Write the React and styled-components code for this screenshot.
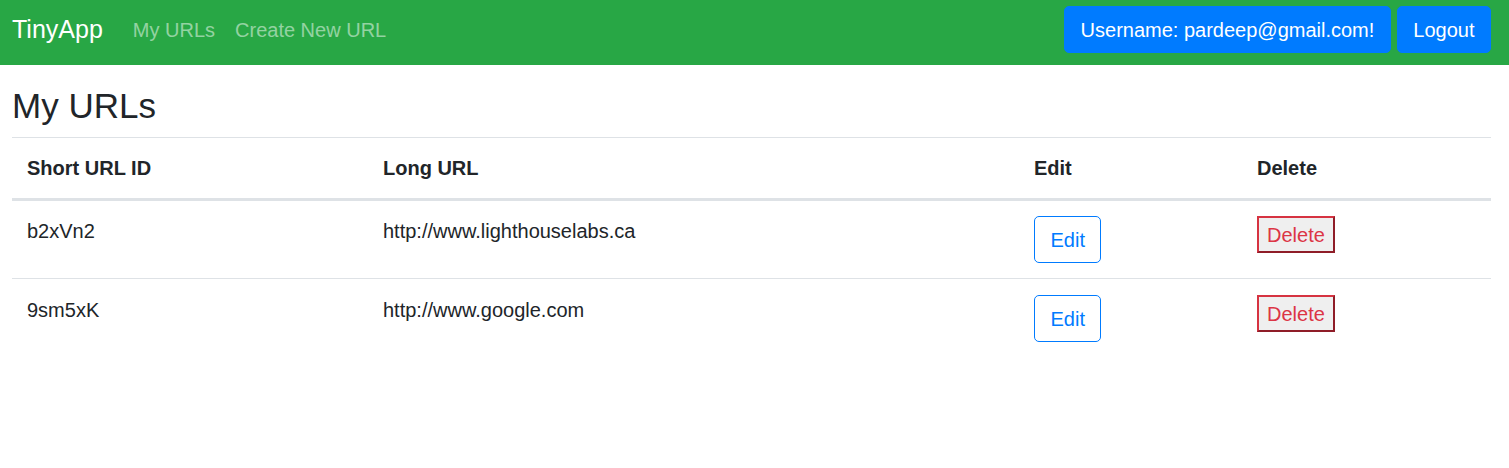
import React from "react";
import styled, { createGlobalStyle } from "styled-components";

const GlobalStyle = createGlobalStyle`
body {
  margin: 0;
  font-family: "Liberation Sans", Arial, sans-serif;
  font-size: 20px;
  line-height: 1.5;
  color: #212529;
  background: #fff;
}
`;

const Navbar = styled.nav`
display: flex;
align-items: center;
justify-content: space-between;
height: 65px;
padding: 0 18px 6px 12px;
background: #28a745;
box-sizing: border-box;
`;

const NavLeft = styled.div`
display: flex;
align-items: center;
`;

const Brand = styled.a`
font-size: 25px;
line-height: 1.5;
color: #fff;
margin-right: 20px;
text-decoration: none;
`;

const NavLink = styled.a`
font-size: 20px;
padding: 0 10px;
color: rgba(255, 255, 255, 0.5);
text-decoration: none;
`;

const NavRight = styled.div`
display: flex;
align-items: center;
gap: 6px;
`;

const Button = styled.button`
font-family: inherit;
font-size: 20px;
line-height: 30px;
padding: 7.5px 15.5px;
border-radius: 5px;
border: 1px solid #007bff;
background: ${(p) => (p.$outline ? "#fff" : "#007bff")};
color: ${(p) => (p.$outline ? "#007bff" : "#fff")};
cursor: pointer;
box-sizing: border-box;
height: 47px;
`;

const DeleteButton = styled.button`
font-family: inherit;
font-size: 20px;
line-height: 30px;
padding: 2px 8px 1px;
background: #efefef;
color: #dc3545;
border: 2px solid;
border-color: #d63341 #8f1d28 #8f1d28 #d63341;
border-radius: 0;
cursor: pointer;
`;

const Main = styled.main`
padding: 0 18px 0 12px;
`;

const Title = styled.h2`
font-size: 35px;
font-weight: 500;
line-height: 42px;
margin: 20px 0 10px;
`;

const Table = styled.table`
width: 100%;
border-collapse: collapse;
table-layout: fixed;
`;

const Th = styled.th`
text-align: left;
font-weight: 700;
padding: 15px 15px 15px;
border-top: 1px solid #dee2e6;
border-bottom: 3px solid #dee2e6;
vertical-align: bottom;
`;

const Td = styled.td`
padding: 15px;
border-top: 1px solid #dee2e6;
vertical-align: top;
`;

const Row = styled.tr`
&:first-child td {
  border-top: none;
}
&:not(:first-child) td {
  padding-top: 16px;
}
`;

const urls = [
  { id: "b2xVn2", long: "http://www.lighthouselabs.ca" },
  { id: "9sm5xK", long: "http://www.google.com" },
];

const App = () => {
  return (
    <>
      <GlobalStyle />
      <Navbar>
        <NavLeft>
          <Brand href="#">TinyApp</Brand>
          <NavLink href="#">My URLs</NavLink>
          <NavLink href="#">Create New URL</NavLink>
        </NavLeft>
        <NavRight>
          <Button>Username: pardeep@gmail.com!</Button>
          <Button>Logout</Button>
        </NavRight>
      </Navbar>
      <Main>
        <Title>My URLs</Title>
        <Table>
          <colgroup>
            <col style={{ width: 356 }} />
            <col style={{ width: 651 }} />
            <col style={{ width: 223 }} />
            <col />
          </colgroup>
          <thead>
            <tr>
              <Th>Short URL ID</Th>
              <Th>Long URL</Th>
              <Th>Edit</Th>
              <Th>Delete</Th>
            </tr>
          </thead>
          <tbody>
            {urls.map((u) => (
              <Row key={u.id}>
                <Td>{u.id}</Td>
                <Td>{u.long}</Td>
                <Td>
                  <Button $outline>Edit</Button>
                </Td>
                <Td>
                  <DeleteButton>Delete</DeleteButton>
                </Td>
              </Row>
            ))}
          </tbody>
        </Table>
      </Main>
    </>
  );
};

export default App;
